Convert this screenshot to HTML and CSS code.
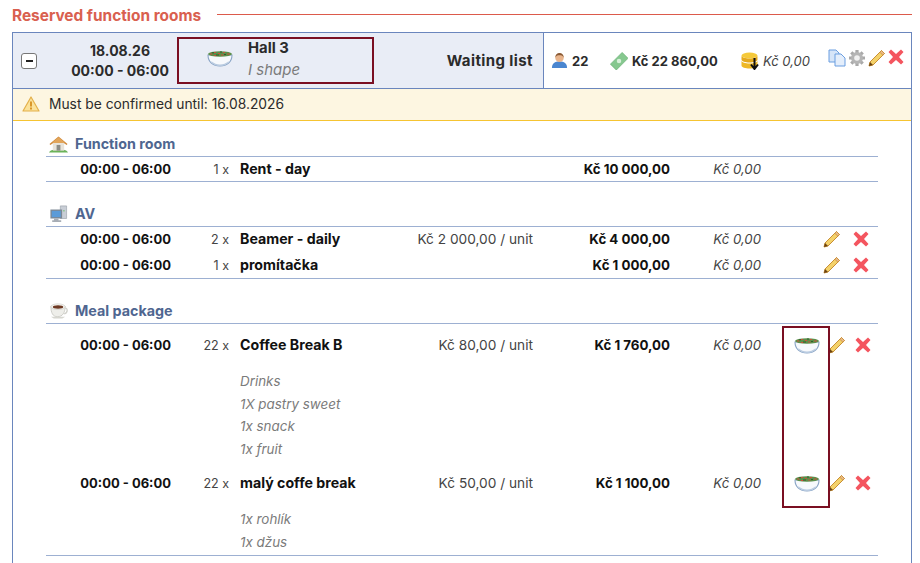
FILE: index.html
```html
<!DOCTYPE html>
<html lang="en">
<head>
<meta charset="UTF-8">
<title>Reserved function rooms</title>
<link rel="stylesheet" href="styles.css">
</head>
<body>
<svg class="defs" width="0" height="0">
<defs>
<symbol id="i-salad" viewBox="0 0 26 17">
<path d="M1 5c0 7 5 11 12 11s12-4 12-11z" fill="#f7f9fc" stroke="#8aa5c6" stroke-width="1.1"/>
<path d="M4 11c3 2.500 6 3.500 9 3.500s6-1 9-3.500c-2 4-5 5-9 5s-7-1-9-5z" fill="#b9cbe0"/>
<ellipse cx="13" cy="4" rx="12" ry="2.800" fill="#5c8f4a"/>
<path d="M3 4h2.500M7 2.500h2M11 3.500h2M16 2.500h2M20 4h3M7 5.500h2.500M14 5h2.500" stroke="#c9503a" stroke-width="1.200"/>
<path d="M5 2.800h2M13 2h2M9 5h3M17 4.500h2" stroke="#2f5e2a" stroke-width="1"/>
</symbol>
<symbol id="i-pencil" viewBox="0 0 18 18">
<path d="M13.5 1.500l3 3L5 16l-4 1 1-4z" fill="#f4d26a" stroke="#c98f35" stroke-width="1"/>
<path d="M13.500 1.500l3 3-1.700 1.700-3-3z" fill="#e9b98a" stroke="#c98f35" stroke-width=".8"/>
<path d="M2 13l-1 4 4-1z" fill="#6b4313"/>
</symbol>
<symbol id="i-del" viewBox="0 0 16 16">
<path d="M3 .5l5 4.500 5-4.500 2.500 2.500-4.500 5 4.500 5-2.500 2.500-5-4.500-5 4.500-2.500-2.500 4.500-5-4.500-5z" fill="#f4555f"/>
</symbol>
<symbol id="i-user" viewBox="0 0 18 18">
<path d="M1 17c0-5 3-7 8-7s8 2 8 7z" fill="#4a86d0"/>
<circle cx="9" cy="6" r="4.500" fill="#e8b48c"/>
<path d="M4.500 6c0-3 2-5 4.500-5s4.500 2 4.500 5c-1-2-2-2.500-4.500-2.500S5.500 4 4.500 6z" fill="#8a5a34"/>
</symbol>
<symbol id="i-money" viewBox="0 0 20 20">
<path d="M13.500 .5L20 7 7 20 .5 13.500z" fill="#86c88f" stroke="#68b074" stroke-width=".8"/>
<circle cx="10" cy="10" r="2.500" fill="#d8f0da"/>
</symbol>
<symbol id="i-coins" viewBox="0 0 18 18">
<ellipse cx="8" cy="3.500" rx="8" ry="3" fill="#f5c93a"/>
<path d="M0 3.500v4c0 2 4 3 8 3s8-1 8-3v-4c0 2-4 3-8 3s-8-1-8-3z" fill="#e5a91c"/>
<path d="M0 8.500v5c0 2 4 3 8 3s8-1 8-3v-5c0 2-4 3-8 3s-8-1-8-3z" fill="#eeb826"/>
<path d="M13 6v10M9.500 12.500l3.500 4.500 3.500-4.500" fill="none" stroke="#111" stroke-width="2"/>
</symbol>
<symbol id="i-copy" viewBox="0 0 18 18">
<path d="M1 1h7l3 3v9H1z" fill="#d6e5f8" stroke="#6b9ee0"/>
<path d="M7 5h6l4 4v8H7z" fill="#e4eefb" stroke="#6b9ee0"/>
</symbol>
<symbol id="i-gear" viewBox="0 0 18 18">
<path d="M9 1v16M1 9h16M3.300 3.300l11.400 11.400M3.300 14.700L14.700 3.300" stroke="#a9a9a9" stroke-width="3.200"/>
<circle cx="9" cy="9" r="6" fill="#b5b5b5"/>
<circle cx="9" cy="9" r="2.800" fill="#f1f1f1"/>
</symbol>
<symbol id="i-warn" viewBox="0 0 18 16">
<path d="M9 1l8 14H1z" fill="#fbe29a" stroke="#e3b04b" stroke-width="1.200" stroke-linejoin="round"/>
<path d="M9 5.500v5M9 11.500v2" stroke="#d58f1e" stroke-width="1.800"/>
</symbol>
<symbol id="i-house" viewBox="0 0 20 18">
<path d="M0 18c1-2 3-3 5-3h10c2 0 4 1 5 3z" fill="#6bb35a"/>
<path d="M4 8h12v8H4z" fill="#e7e3da"/>
<path d="M8 10h4v6H8z" fill="#8c8c86"/>
<path d="M10 1l9.500 8-1 1L10 4 1.500 10l-1-1z" fill="#d08a3c"/>
<path d="M10 2l6 5v1H4V7z" fill="#e2a55a"/>
</symbol>
<symbol id="i-pc" viewBox="0 0 20 20">
<path d="M12 1h7v14h-7z" fill="#c9ced6" stroke="#8d949e" stroke-width=".6"/>
<path d="M1 5h13v10H1z" fill="#7d8894"/>
<path d="M2.500 6.500h10v7h-10z" fill="#5b9bd8"/>
<path d="M5 15h5v2h3v2H3v-2h2z" fill="#a7adb5"/>
<path d="M15 6h2v1h-2z" fill="#5fc05f"/>
</symbol>
<symbol id="i-cup" viewBox="0 0 20 18">
<path d="M2 4c0 7 2 11 7 11s8-4 8-11z" fill="#eeeeea" stroke="#c4c4bd" stroke-width=".8"/>
<ellipse cx="9.500" cy="4.500" rx="7.500" ry="3" fill="#f6f6f3" stroke="#c4c4bd" stroke-width=".6"/>
<ellipse cx="9.500" cy="4.800" rx="5.500" ry="1.800" fill="#6e3a24"/>
<path d="M17 6c3 0 3 5-1 6" fill="none" stroke="#d0d0ca" stroke-width="1.400"/>
<path d="M2 15h15l-3 2H5z" fill="#d6d6d0"/>
</symbol>
</defs>
</svg>

<div class="title-row">
<h2>Reserved function rooms</h2>
<span class="title-line"></span>
</div>

<div class="panel">
<div class="panel-head">
<div class="head-left">
<span class="toggle"><i></i></span>
<div class="date">18.08.26<br>00:00 - 06:00</div>
<div class="room">
<svg class="salad-sm"><use href="#i-salad"/></svg>
<div class="room-text">
<b>Hall 3</b>
<em>I shape</em>
</div>
</div>
<div class="status">Waiting list</div>
</div>
<div class="head-right">
<svg class="ic-17"><use href="#i-user"/></svg>
<b class="guests">22</b>
<svg class="ic-18 money"><use href="#i-money"/></svg>
<b class="price">Kč 22 860,00</b>
<svg class="ic-18 coins"><use href="#i-coins"/></svg>
<em class="discount">Kč 0,00</em>
<div class="tools">
<svg class="ic-18"><use href="#i-copy"/></svg>
<svg class="ic-18"><use href="#i-gear"/></svg>
<svg class="ic-18"><use href="#i-pencil"/></svg>
<svg class="ic-16"><use href="#i-del"/></svg>
</div>
</div>
</div>

<div class="notice">
<svg class="warn"><use href="#i-warn"/></svg>
Must be confirmed until: 16.08.2026
</div>

<div class="panel-body">
<section class="group">
<h3><svg><use href="#i-house"/></svg>Function room</h3>
<div class="rows">
<div class="row single">
<b class="time">00:00 - 06:00</b><span class="qty">1 x</span><b class="name">Rent - day</b>
<span class="unit"></span><b class="total">Kč 10 000,00</b><em class="disc">Kč 0,00</em>
</div>
</div>
</section>

<section class="group">
<h3><svg><use href="#i-pc"/></svg>AV</h3>
<div class="rows">
<div class="row">
<b class="time">00:00 - 06:00</b><span class="qty">2 x</span><b class="name">Beamer - daily</b>
<span class="unit">Kč 2 000,00 / unit</span><b class="total">Kč 4 000,00</b><em class="disc">Kč 0,00</em>
<div class="acts"><svg class="ic-18"><use href="#i-pencil"/></svg><svg class="ic-16"><use href="#i-del"/></svg></div>
</div>
<div class="row">
<b class="time">00:00 - 06:00</b><span class="qty">1 x</span><b class="name">promítačka</b>
<span class="unit"></span><b class="total">Kč 1 000,00</b><em class="disc">Kč 0,00</em>
<div class="acts"><svg class="ic-18"><use href="#i-pencil"/></svg><svg class="ic-16"><use href="#i-del"/></svg></div>
</div>
</div>
</section>

<section class="group meal">
<h3><svg><use href="#i-cup"/></svg>Meal package</h3>
<div class="rows">
<div class="row">
<b class="time">00:00 - 06:00</b><span class="qty">22 x</span><b class="name">Coffee Break B</b>
<span class="unit">Kč 80,00 / unit</span><b class="total">Kč 1 760,00</b><em class="disc">Kč 0,00</em>
<div class="acts"><svg class="salad"><use href="#i-salad"/></svg><svg class="ic-18"><use href="#i-pencil"/></svg><svg class="ic-16"><use href="#i-del"/></svg></div>
</div>
<ul class="items">
<li>Drinks</li>
<li>1X pastry sweet</li>
<li>1x snack</li>
<li>1x fruit</li>
</ul>
<div class="row">
<b class="time">00:00 - 06:00</b><span class="qty">22 x</span><b class="name">malý coffe break</b>
<span class="unit">Kč 50,00 / unit</span><b class="total">Kč 1 100,00</b><em class="disc">Kč 0,00</em>
<div class="acts"><svg class="salad"><use href="#i-salad"/></svg><svg class="ic-18"><use href="#i-pencil"/></svg><svg class="ic-16"><use href="#i-del"/></svg></div>
</div>
<ul class="items">
<li>1x rohlík</li>
<li>1x džus</li>
</ul>
</div>
<div class="highlight"></div>
</section>
</div>
</div>
</body>
</html>
```

FILE: styles.css
```css
html, body {
  height: 563px;
  overflow: hidden;
}

body {
  margin: 0;
  padding: 6px 8px 0 12px;
  background: #fff;
  color: #2b2b2b;
  font-family: Inter, "Open Sans", sans-serif;
  font-size: 13px;
}

svg {
  display: block;
  flex: none;
}

.defs {
  position: absolute;
}

.title-row {
  display: flex;
  align-items: center;
  gap: 16px;
  height: 18px;
}

.title-row h2 {
  margin: 0;
  font-size: 15.4px;
  font-weight: 700;
  color: #d9604f;
}

.title-line {
  flex: 1;
  height: 1px;
  margin-top: -1px;
  background: #dc5a4b;
}

.panel {
  margin-top: 8px;
  height: 600px;
  border: 1px solid #6a86bd;
}

.panel-head {
  display: flex;
  height: 55px;
  border-bottom: 1px solid #6a86bd;
}

.head-left {
  display: flex;
  align-items: center;
  width: 530px;
  background: #e9edf6;
  border-right: 1px solid #6a86bd;
}

.toggle {
  display: flex;
  align-items: center;
  justify-content: center;
  box-sizing: border-box;
  width: 16px;
  height: 16px;
  margin-left: 8px;
  background: #fff;
  border: 1px solid #777;
  border-radius: 3px;
}

.toggle i {
  width: 7px;
  height: 2px;
  background: #222;
}

.date {
  width: 102px;
  margin: 0 6px 0 32px;
  text-align: center;
  font-size: 14px;
  font-weight: 700;
  line-height: 20px;
  white-space: nowrap;
}

.room {
  display: flex;
  box-sizing: border-box;
  width: 197px;
  height: 47px;
  padding: 0 0 0 28px;
  align-items: center;
  gap: 15px;
  border: 2px solid #7a0f22;
}

.salad-sm {
  width: 26px;
  height: 17px;
  margin-top: -4px;
}

.room-text {
  margin-top: -2px;
}

.room-text b {
  display: block;
  font-size: 14.8px;
  line-height: 20px;
}

.room-text em {
  display: block;
  line-height: 24px;
  font-size: 15px;
  color: #7b7b7b;
}

.status {
  flex: 1;
  padding-right: 10px;
  text-align: right;
  font-weight: 700;
  font-size: 15px;
  letter-spacing: .4px;
  white-space: nowrap;
}

.head-right {
  display: flex;
  flex: 1;
  align-items: center;
  padding-left: 7px;
}

.ic-17 {
  width: 17px;
  height: 17px;
}

.ic-18 {
  width: 18px;
  height: 18px;
}

.ic-16 {
  width: 16px;
  height: 16px;
}

.guests {
  margin-left: 4px;
  width: 26px;
}

.money {
  margin-left: 12px;
  margin-right: 2px;
}

.price {
  margin-left: 2px;
  width: 88px;
  white-space: nowrap;
}

.coins {
  width: 19px;
  margin-left: 21px;
}

.discount {
  margin-left: 3px;
  width: 48px;
  color: #444;
  white-space: nowrap;
}

.tools {
  display: flex;
  gap: 2px;
  margin: -6px 0 0 17px;
}

.notice {
  display: flex;
  align-items: center;
  gap: 9px;
  box-sizing: border-box;
  height: 32px;
  padding: 0 0 1px 9px;
  background: #fdf6e1;
  border-bottom: 1px solid #f6c431;
  font-size: 13.8px;
}

.warn {
  width: 18px;
  height: 16px;
}

.panel-body {
  padding: 11px 33px 0;
}

.group {
  position: relative;
  margin-bottom: 20px;
}

.group h3 {
  display: flex;
  align-items: center;
  gap: 7px;
  box-sizing: border-box;
  margin: 0;
  padding: 0 0 1px 3px;
  height: 24px;
  font-size: 14.3px;
  font-weight: 700;
  color: #4f6690;
}

.group h3 svg {
  width: 19px;
  height: 18px;
}

.rows {
  border-top: 1px solid #9db0d2;
  border-bottom: 1px solid #9db0d2;
}

.row {
  display: grid;
  grid-template-columns: 125px 58px 11px 152px 141px 137px 91px 117px;
  align-items: center;
  box-sizing: border-box;
  height: 25px;
  padding-bottom: 1px;
  white-space: nowrap;
  color: #111;
}

.row + .row {
  margin-top: 1px;
}

.row.single {
  height: 24px;
  padding-bottom: 0;
}

.time {
  justify-self: end;
}

.qty {
  justify-self: end;
  color: #444;
  font-size: 12.5px;
}

.name {
  grid-column: 4;
  margin-top: -1px;
  font-size: 14.2px;
}

.unit {
  justify-self: end;
  color: #444;
  font-size: 13.7px;
}

.total {
  justify-self: end;
  font-size: 13.3px;
}

.disc {
  justify-self: end;
  color: #444;
  font-size: 13.2px;
}

.acts {
  display: flex;
  align-items: center;
  justify-content: flex-end;
  gap: 12px;
  padding-right: 9px;
}

.meal .rows {
  padding-top: 8px;
}

.meal .row {
  height: 26px;
  padding-bottom: 0;
}

.meal .acts {
  gap: 9px;
  padding-right: 7px;
}

.salad {
  width: 26px;
  height: 17px;
  margin-right: -1px;
}

.items {
  margin: 0;
  padding: 12px 0 10px 194px;
  list-style: none;
  font-size: 13.4px;
  font-style: italic;
  color: #7b7b7b;
}

.items:last-child {
  padding-bottom: 2px;
}

.items li {
  line-height: 22.5px;
}

.highlight {
  position: absolute;
  left: 736px;
  top: 27px;
  box-sizing: border-box;
  width: 48px;
  height: 182px;
  border: 2px solid #7a0f22;
}
```
